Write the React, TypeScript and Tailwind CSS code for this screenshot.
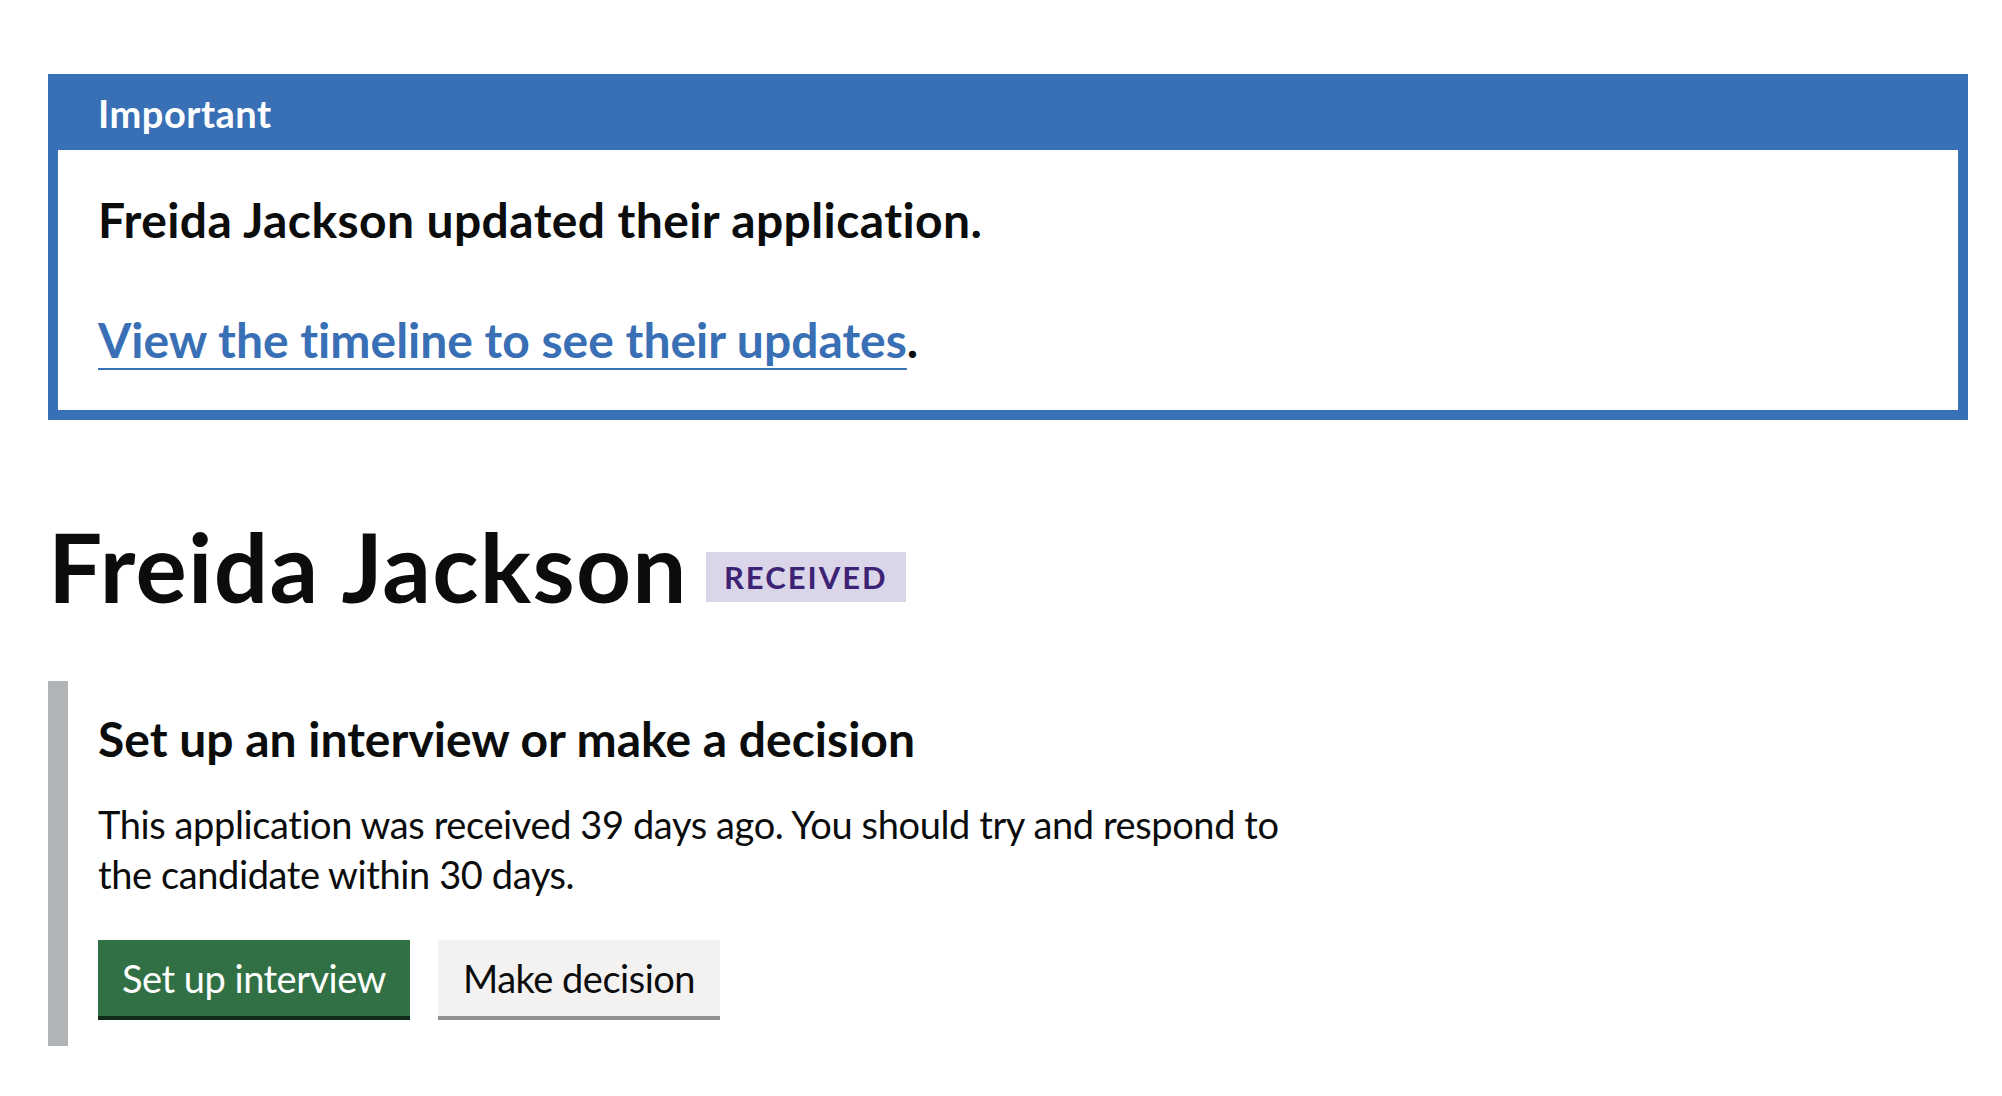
import React from 'react';

const font = { fontFamily: 'Lato, "Noto Sans", Arial, sans-serif' };

const NotificationBanner: React.FC = () => (
  <div className="border-[10px] border-[#386fb5] bg-[#386fb5]">
    <h2 className="pl-[40px] pt-[4px] pb-[12px] text-[38px] leading-[50px] font-bold tracking-[0.5px] text-white">
      Important
    </h2>
    <div className="bg-white px-[40px] py-[40px] text-[#0b0c0c]">
      <p className="text-[48px] leading-[60px] font-bold tracking-[0.4px]">Freida Jackson updated their application.</p>
      <p className="mt-[60px] text-[48px] leading-[60px] font-bold">
        <a
          href="#timeline"
          className="text-[#386fb5] underline decoration-[2px] underline-offset-[10px]"
        >
          View the timeline to see their updates
        </a>
        .
      </p>
    </div>
  </div>
);

const App: React.FC = () => {
  return (
    <div className="min-h-screen bg-white text-[#0b0c0c] [font-variant-ligatures:none]" style={font}>
      <div className="ml-[48px] w-[1920px] pt-[74px] pb-[50px]">
        <NotificationBanner />

        <h1 className="mt-[96px] flex items-end gap-[18px] text-[96px] leading-[100px] font-bold tracking-[1.3px]">
          <span>Freida Jackson</span>
          <strong className="mb-[14px] flex h-[50px] w-[200px] items-center justify-center bg-[#dbd5e9] text-[31px] font-bold uppercase tracking-[2px] text-[#3d2375]">
            Received
          </strong>
        </h1>

        <div className="mt-[65px] border-l-[20px] border-[#b1b4b6] px-[30px] pt-[28px] pb-[30px]">
          <h2 className="text-[48px] leading-[60px] font-bold">Set up an interview or make a decision</h2>
          <p className="mt-[30px] max-w-[1200px] text-[38px] leading-[50px] tracking-[-0.4px]">
            This application was received 39 days ago. You should try and respond to the candidate within 30 days.
          </p>
          <div className="mt-[41px] flex gap-[28px]">
            <button className="flex h-[76px] w-[312px] items-center justify-center bg-[#307044] text-[38px] tracking-[-0.5px] text-white shadow-[0_4px_0_#102a19]">
              Set up interview
            </button>
            <button className="flex h-[76px] w-[282px] items-center justify-center bg-[#f3f2f1] text-[38px] tracking-[-0.5px] text-[#0b0c0c] shadow-[0_4px_0_#929191]">
              Make decision
            </button>
          </div>
        </div>
      </div>
    </div>
  );
};

export default App;
